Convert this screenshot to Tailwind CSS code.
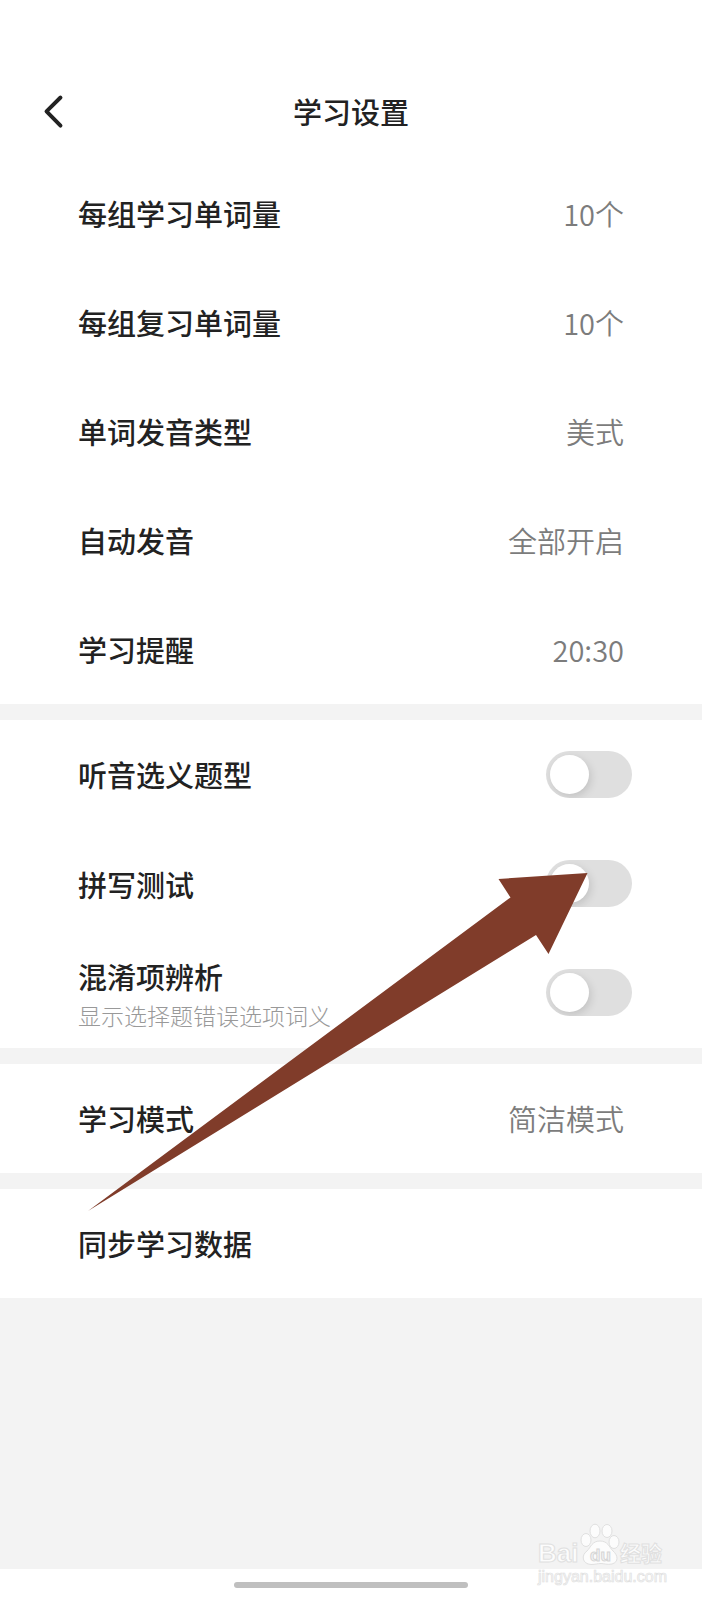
<!DOCTYPE html>
<html lang="zh-CN">
    <head>
        <meta charset="UTF-8">
        <meta name="viewport" content="width=device-width, initial-scale=1.0">
        <title>学习设置</title>
        <script src="https://cdn.jsdelivr.net/npm/@tailwindcss/browser@4"></script>
    </head>
    <body class="relative min-h-screen flex flex-col bg-[#f3f3f3] font-['Noto_Sans_CJK_SC',sans-serif] text-[29px] leading-[44px] text-[#222222]">
        <header class="grid grid-cols-[1fr_auto_1fr] items-center bg-white px-10 pt-[89px] pb-[26px]">
            <button type="button" aria-label="返回" class="w-7 h-10">
                <svg viewBox="0 0 28 40" fill="none" stroke="currentColor" stroke-width="3.9" stroke-linecap="round" stroke-linejoin="round" class="w-7 h-10">
                    <path d="M20.500 6.500 6.500 20.300 20.500 34.700" />
                </svg>
            </button>
            <h1 class="font-medium">学习设置</h1>
        </header>

        <main class="flex flex-col gap-4">
            <section class="bg-white">
                <button type="button" class="flex w-full h-[109px] items-center justify-between px-[78px] pb-[2px]">
                    <span class="font-medium">每组学习单词量</span>
                    <span class="font-['Noto_Sans_CJK_SC_DemiLight','Noto_Sans_CJK_SC',sans-serif] text-[#7c7c7c]">10个</span>
                </button>
                <button type="button" class="flex w-full h-[109px] items-center justify-between px-[78px] pb-[2px]">
                    <span class="font-medium">每组复习单词量</span>
                    <span class="font-['Noto_Sans_CJK_SC_DemiLight','Noto_Sans_CJK_SC',sans-serif] text-[#7c7c7c]">10个</span>
                </button>
                <button type="button" class="flex w-full h-[109px] items-center justify-between px-[78px] pb-[2px]">
                    <span class="font-medium">单词发音类型</span>
                    <span class="font-['Noto_Sans_CJK_SC_DemiLight','Noto_Sans_CJK_SC',sans-serif] text-[#7c7c7c]">美式</span>
                </button>
                <button type="button" class="flex w-full h-[109px] items-center justify-between px-[78px] pb-[2px]">
                    <span class="font-medium">自动发音</span>
                    <span class="font-['Noto_Sans_CJK_SC_DemiLight','Noto_Sans_CJK_SC',sans-serif] text-[#7c7c7c]">全部开启</span>
                </button>
                <button type="button" class="flex w-full h-[109px] items-center justify-between px-[78px] pb-[2px]">
                    <span class="font-medium">学习提醒</span>
                    <span class="font-['Noto_Sans_CJK_SC_DemiLight','Noto_Sans_CJK_SC',sans-serif] text-[#7c7c7c]">20:30</span>
                </button>
            </section>

            <!-- 开关项 -->
            <section class="bg-white">
                <div class="flex h-[110px] items-center justify-between pl-[78px] pr-[70px] pb-[2px]">
                    <label for="listening" class="font-medium">听音选义题型</label>
                    <input id="listening" type="checkbox" role="switch" class="appearance-none flex items-center w-[86px] h-[47px] px-1 rounded-full bg-[#dfdfdf] overflow-hidden before:size-[39px] before:rounded-full before:bg-white before:shadow-[2px_3px_9px_rgba(0,0,0,0.13)] checked:justify-end checked:bg-green-500">
                </div>
                <div class="flex h-[109px] items-center justify-between pl-[78px] pr-[70px] pb-[2px]">
                    <label for="spelling" class="font-medium">拼写测试</label>
                    <input id="spelling" type="checkbox" role="switch" class="appearance-none flex items-center w-[86px] h-[47px] px-1 rounded-full bg-[#dfdfdf] overflow-hidden before:size-[39px] before:rounded-full before:bg-white before:shadow-[2px_3px_9px_rgba(0,0,0,0.13)] checked:justify-end checked:bg-green-500">
                </div>
                <div class="flex h-[109px] items-center justify-between pl-[78px] pr-[70px] pb-[2px]">
                    <label for="confusing" class="flex flex-col">
                        <span class="font-medium">混淆项辨析</span>
                        <span class="font-light text-[23px] leading-[34px] text-[#999999]">显示选择题错误选项词义</span>
                    </label>
                    <input id="confusing" type="checkbox" role="switch" class="appearance-none flex items-center w-[86px] h-[47px] px-1 rounded-full bg-[#dfdfdf] overflow-hidden before:size-[39px] before:rounded-full before:bg-white before:shadow-[2px_3px_9px_rgba(0,0,0,0.13)] checked:justify-end checked:bg-green-500">
                </div>
            </section>

            <section class="bg-white">
                <button type="button" class="flex w-full h-[109px] items-center justify-between px-[78px] pb-[2px]">
                    <span class="font-medium">学习模式</span>
                    <span class="font-['Noto_Sans_CJK_SC_DemiLight','Noto_Sans_CJK_SC',sans-serif] text-[#7c7c7c]">简洁模式</span>
                </button>
            </section>

            <section class="bg-white">
                <button type="button" class="flex w-full h-[109px] items-center justify-between px-[78px] pb-[2px]">
                    <span class="font-medium">同步学习数据</span>
                </button>
            </section>
        </main>

        <footer class="mt-auto flex h-[31px] items-center justify-center bg-white">
            <div class="w-1/3 h-[6px] rounded-full bg-[#bfbfbf]"></div>
        </footer>

        <!-- 指示箭头 -->
        <svg viewBox="0 0 500 340" class="pointer-events-none absolute left-[88px] top-[872px] w-[500px] h-[340px]">
            <path fill="#803c2a" d="M499.500 1 410.500 7 422.500 25.500 0 339 448 63 460.500 82Z" />
        </svg>

        <!-- 水印 -->
        <svg viewBox="0 0 136 70" class="pointer-events-none absolute right-[34px] bottom-[10px] w-[136px] h-[70px]" fill="#fcfcfc" stroke="#e0e0e0" stroke-width="1">
            <text x="6" y="42" font-family="Liberation Sans, sans-serif" font-weight="bold" font-size="26">Bai</text>
            <ellipse cx="54" cy="20" rx="5" ry="6.500" />
            <ellipse cx="63" cy="11" rx="5" ry="6.800" />
            <ellipse cx="75" cy="11" rx="5" ry="6.500" />
            <ellipse cx="82" cy="22" rx="5" ry="6.500" />
            <path d="M68 21C60 21 59 27 55 31 49 35 50 44 59 44.500 64 44.500 65 43.500 69 43.500 72 43.500 75 45 80 44 87 42 86 35 81 31 77 27 76 21 68 21Z" />
            <text x="58" y="41" font-family="Liberation Sans, sans-serif" font-weight="bold" font-size="17" fill="#f3f3f3" stroke="#d6d6d6">du</text>
            <text x="88" y="41" font-family="Noto Sans CJK SC, sans-serif" font-weight="bold" font-size="21">经验</text>
            <text x="6" y="62" font-family="Liberation Sans, sans-serif" font-size="16" stroke-width="0.7">jingyan.baidu.com</text>
        </svg>
    </body>
</html>
